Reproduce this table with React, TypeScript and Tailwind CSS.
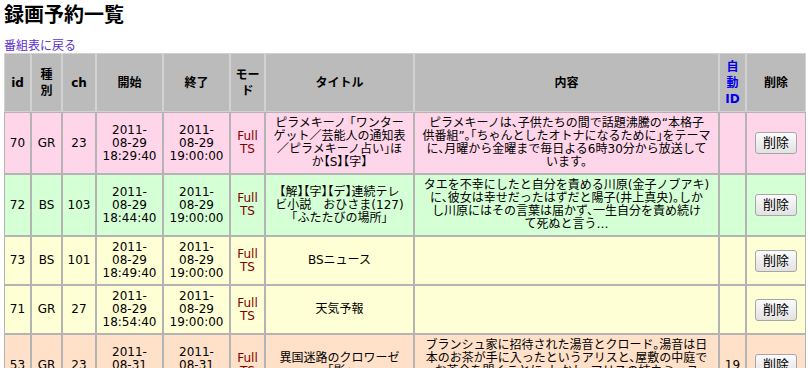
import React from 'react';

type Row = {
  id: string;
  type: string;
  ch: string;
  start: string[];
  end: string[];
  title: string[];
  desc: string[];
  autoId: string;
  bg: string;
};

const rows: Row[] = [
  {
    id: '70',
    type: 'GR',
    ch: '23',
    start: ['2011-', '08-29', '18:29:40'],
    end: ['2011-', '08-29', '19:00:00'],
    title: ['ピラメキーノ 「ワンター', 'ゲット／芸能人の通知表', '／ピラメキーノ占い」ほ', 'か【S】【字】'],
    desc: [
      'ピラメキーノは、子供たちの間で話題沸騰の“本格子',
      '供番組”。「ちゃんとしたオトナになるために」をテーマ',
      'に、月曜から金曜まで毎日よる6時30分から放送して',
      'います。',
    ],
    autoId: '',
    bg: 'bg-[#ffd5ea]',
  },
  {
    id: '72',
    type: 'BS',
    ch: '103',
    start: ['2011-', '08-29', '18:44:40'],
    end: ['2011-', '08-29', '19:00:00'],
    title: ['【解】【字】【デ】連続テレ', 'ビ小説　おひさま(127)', '「ふたたびの場所」'],
    desc: [
      'タエを不幸にしたと自分を責める川原(金子ノブアキ)',
      'に、彼女は幸せだったはずだと陽子(井上真央)。しか',
      'し川原にはその言葉は届かず、一生自分を責め続け',
      'て死ぬと言う…',
    ],
    autoId: '',
    bg: 'bg-[#d5ffd5]',
  },
  {
    id: '73',
    type: 'BS',
    ch: '101',
    start: ['2011-', '08-29', '18:49:40'],
    end: ['2011-', '08-29', '19:00:00'],
    title: ['BSニュース'],
    desc: [],
    autoId: '',
    bg: 'bg-[#ffffd5]',
  },
  {
    id: '71',
    type: 'GR',
    ch: '27',
    start: ['2011-', '08-29', '18:54:40'],
    end: ['2011-', '08-29', '19:00:00'],
    title: ['天気予報'],
    desc: [],
    autoId: '',
    bg: 'bg-[#ffffd5]',
  },
  {
    id: '53',
    type: 'GR',
    ch: '23',
    start: ['2011-', '08-31', '01:55:00'],
    end: ['2011-', '08-31', '02:25:00'],
    title: ['異国迷路のクロワーゼ', '「影」'],
    desc: [
      'ブランシュ家に招待された湯音とクロード。湯音は日',
      '本のお茶が手に入ったというアリスと、屋敷の中庭で',
      'お茶会を開くことに。しかし、アリスの姉カミーユ',
      'は湯音に冷たい態度をとり…',
    ],
    autoId: '19',
    bg: 'bg-[#ffe0c8]',
  },
];

function Lines({ lines }: { lines: string[] }) {
  return (
    <>
      {lines.map((l, i) => (
        <React.Fragment key={i}>
          {i > 0 && <br />}
          {l}
        </React.Fragment>
      ))}
    </>
  );
}

const th = 'bg-[#bbbbbb] border border-[#d2d2d2] px-[3px] py-[4.5px] font-bold leading-[16px] text-center align-middle';
const td = 'border border-[#b4b4b4] px-[3px] py-[4px] leading-[13px] text-center align-middle';
const txt = `${td} whitespace-nowrap [font-feature-settings:'halt']`;

export default function App() {
  return (
    <div className="w-[808px] h-[368px] overflow-hidden bg-white pl-[4px] text-black font-['DejaVu_Sans','Noto_Sans_CJK_JP',sans-serif]">
      {/* Page title */}
      <h1 className="mt-[3px] text-[20px] leading-[24px] font-bold">録画予約一覧</h1>

      {/* Back link */}
      <div className="mt-[13px] text-[12px] leading-[13px]">
        <a href="#" className="text-[#5b2fc9]">番組表に戻る</a>
      </div>

      {/* Reservation table */}
      <table className="table-fixed w-[802px] border-separate border-spacing-0 text-[12px]">
        <thead>
          <tr>
            <th className={`${th} w-[27px]`}>id</th>
            <th className={`${th} w-[31px]`}>種別</th>
            <th className={`${th} w-[34px]`}>ch</th>
            <th className={`${th} w-[67px]`}>開始</th>
            <th className={`${th} w-[67px]`}>終了</th>
            <th className={`${th} w-[35px]`}>モード</th>
            <th className={`${th} w-[149px]`}>タイトル</th>
            <th className={`${th} w-[305px]`}>内容</th>
            <th className={`${th} w-[27px] text-[#0000ee]`}>自動ID</th>
            <th className={`${th} w-[60px]`}>削除</th>
          </tr>
        </thead>
        <tbody>
          {rows.map((r) => (
            <tr key={r.id} className={r.bg}>
              <td className={td}>{r.id}</td>
              <td className={td}>{r.type}</td>
              <td className={td}>{r.ch}</td>
              <td className={td}>
                <Lines lines={r.start} />
              </td>
              <td className={td}>
                <Lines lines={r.end} />
              </td>
              <td className={`${td} text-[#800000]`}>
                Full
                <br />
                TS
              </td>
              <td className={txt}>
                <Lines lines={r.title} />
              </td>
              <td className={txt}>
                <Lines lines={r.desc} />
              </td>
              <td className={td}>{r.autoId}</td>
              <td className={td}>
                <button
                  type="button"
                  className="h-[22px] px-[7px] text-[13px] leading-[20px] border border-[#a6a6a6] rounded-[3px] bg-gradient-to-b from-[#fbfbfb] to-[#e2e2e2]"
                >
                  削除
                </button>
              </td>
            </tr>
          ))}
        </tbody>
      </table>
    </div>
  );
}
